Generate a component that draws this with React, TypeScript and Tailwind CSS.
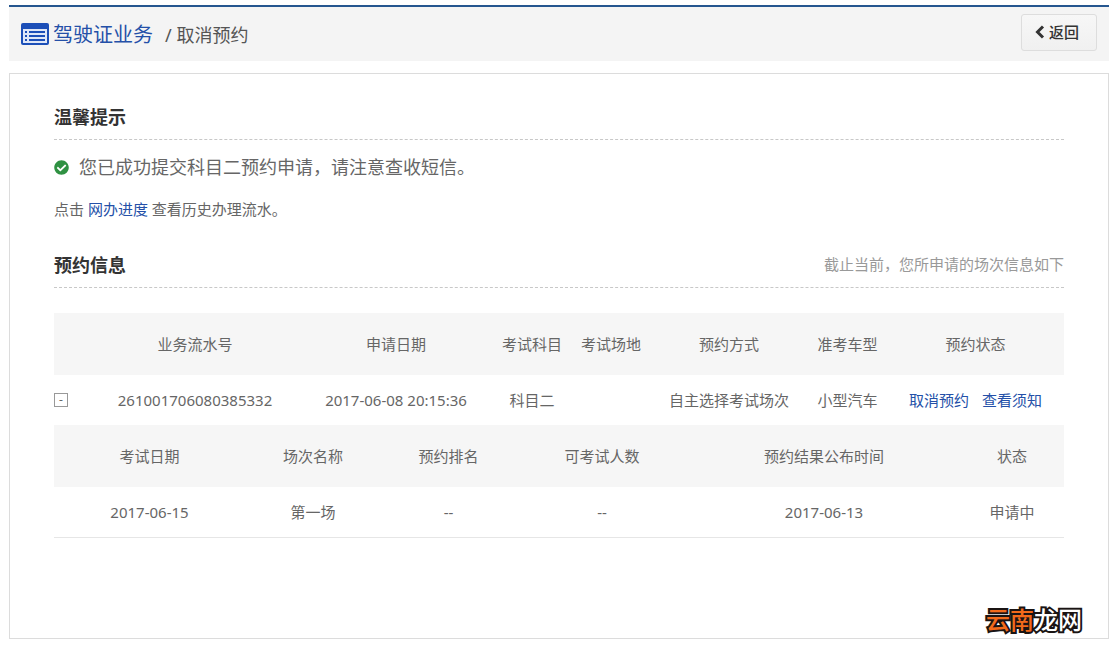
import React, { useState } from 'react';
import { FaCheckCircle } from 'react-icons/fa';

interface Session {
  examDate: string;
  name: string;
  rank: string;
  capacity: string;
  publishDate: string;
  status: string;
}

interface Booking {
  serial: string;
  appliedAt: string;
  subject: string;
  place: string;
  method: string;
  carType: string;
  sessions: Session[];
}

const bookings: Booking[] = [
  {
    serial: '261001706080385332',
    appliedAt: '2017-06-08 20:15:36',
    subject: '科目二',
    place: '',
    method: '自主选择考试场次',
    carType: '小型汽车',
    sessions: [
      {
        examDate: '2017-06-15',
        name: '第一场',
        rank: '--',
        capacity: '--',
        publishDate: '2017-06-13',
        status: '申请中',
      },
    ],
  },
];

function ListIcon() {
  return (
    <svg width="28" height="22" viewBox="0 0 28 22" aria-hidden="true">
      <rect width="28" height="22" rx="2" fill="#1c4fb8" />
      <rect x="2" y="6" width="24" height="14" fill="#dfe7f8" />
      <g fill="#1c4fb8">
        <rect x="4" y="8" width="2" height="2" />
        <rect x="8" y="8" width="16" height="2" />
        <rect x="4" y="12" width="2" height="2" />
        <rect x="8" y="12" width="16" height="2" />
        <rect x="4" y="16" width="2" height="2" />
        <rect x="8" y="16" width="16" height="2" />
      </g>
    </svg>
  );
}

function BackIcon() {
  return (
    <svg width="10" height="14" viewBox="0 0 10 14" fill="none" stroke="currentColor" strokeWidth="3" aria-hidden="true">
      <path d="M8 1.5 2.5 7 8 12.5" />
    </svg>
  );
}

function SectionTitle({ title, note }: { title: string; note?: string }) {
  return (
    <div className="flex items-start justify-between border-b border-dashed border-[#c8c8c8] pb-[10px]">
      <h2 className="text-[18px] leading-6 font-bold text-[#333]">{title}</h2>
      {note && <p className="text-[15px] leading-[22px] text-[#999]">{note}</p>}
    </div>
  );
}

function SessionTable({ sessions }: { sessions: Session[] }) {
  return (
    <table className="w-full table-fixed text-center">
      <thead>
        <tr className="h-[62px] bg-[#f6f6f6]">
          <th className="w-[191px] font-normal">考试日期</th>
          <th className="w-[136px] font-normal">场次名称</th>
          <th className="w-[135px] font-normal">预约排名</th>
          <th className="w-[172px] font-normal">可考试人数</th>
          <th className="w-[272px] font-normal">预约结果公布时间</th>
          <th className="w-[104px] font-normal">状态</th>
        </tr>
      </thead>
      <tbody>
        {sessions.map((s) => (
          <tr key={s.examDate} className="h-[50px] border-b border-[#e6e6e6]">
            <td>{s.examDate}</td>
            <td>{s.name}</td>
            <td>{s.rank}</td>
            <td>{s.capacity}</td>
            <td>{s.publishDate}</td>
            <td>{s.status}</td>
          </tr>
        ))}
      </tbody>
    </table>
  );
}

export default function App() {
  const [open, setOpen] = useState(true);

  return (
    <div className="bg-white px-[9px] pt-[5px] pb-[10px] font-['Noto_Sans','Noto_Sans_CJK_SC',sans-serif] text-[15px] leading-6 font-normal text-[#666]">
      {/* Header */}
      <header className="flex h-14 items-center justify-between border-t-2 border-[#25568f] bg-[#f4f4f4] px-3">
        <div className="flex items-center">
          <ListIcon />
          <h1 className="ml-1 pt-[2px] text-[20px] text-[#2450a8]">驾驶证业务</h1>
          <span className="ml-3 pt-[2px] text-[18px] text-[#555]">/ 取消预约</span>
        </div>
        <button
          type="button"
          className="mb-1 flex h-[37px] w-[76px] items-center justify-center gap-1 rounded-[3px] border border-[#ddd] bg-linear-to-b from-[#f7f7f7] to-[#f0f0f0] pr-1 font-medium text-[#333]"
        >
          <BackIcon />
          返回
        </button>
      </header>

      <main className="relative mt-3 border border-[#dcdcdc] px-11 pt-[31px] pb-[100px]">
        {/* Tips */}
        <SectionTitle title="温馨提示" />
        <p className="mt-[13px] flex items-center gap-[10px] text-[18px] leading-7">
          <FaCheckCircle size={15} className="text-[#2f9142]" />
          您已成功提交科目二预约申请，请注意查收短信。
        </p>
        <p className="mt-4 mb-8">
          点击 <a href="#progress" className="text-[#2450a8]">网办进度</a> 查看历史办理流水。
        </p>

        {/* Booking info */}
        <SectionTitle title="预约信息" note="截止当前，您所申请的场次信息如下" />
        <table className="mt-[25px] w-full table-fixed text-center">
          <thead>
            <tr className="h-[62px] bg-[#f6f6f6]">
              <th className="w-[36px]" />
              <th className="w-[210px] font-normal">业务流水号</th>
              <th className="w-[192px] font-normal">申请日期</th>
              <th className="w-[80px] font-normal">考试科目</th>
              <th className="w-[78px] font-normal">考试场地</th>
              <th className="w-[158px] font-normal">预约方式</th>
              <th className="w-[79px] font-normal">准考车型</th>
              <th className="w-[177px] font-normal">预约状态</th>
            </tr>
          </thead>
          <tbody>
            {bookings.map((b) => (
              <React.Fragment key={b.serial}>
                <tr className="h-[50px]">
                  <td>
                    <button
                      type="button"
                      aria-expanded={open}
                      onClick={() => setOpen(!open)}
                      className="flex size-[14px] items-center justify-center border border-[#999] text-[12px] leading-3"
                    >
                      {open ? '-' : '+'}
                    </button>
                  </td>
                  <td>{b.serial}</td>
                  <td>{b.appliedAt}</td>
                  <td>{b.subject}</td>
                  <td>{b.place}</td>
                  <td>{b.method}</td>
                  <td>{b.carType}</td>
                  <td>
                    <div className="flex justify-center gap-[13px] text-[#2450a8]">
                      <a href="#cancel">取消预约</a>
                      <a href="#notice">查看须知</a>
                    </div>
                  </td>
                </tr>
                {open && (
                  <tr>
                    <td colSpan={8} className="p-0">
                      <SessionTable sessions={b.sessions} />
                    </td>
                  </tr>
                )}
              </React.Fragment>
            ))}
          </tbody>
        </table>

        {/* Watermark */}
        <div className="absolute right-[26px] bottom-0 text-[24px] leading-9 font-medium text-white [-webkit-text-stroke:4px_#1a1413] [paint-order:stroke_fill]">
          <span className="text-[#f26a1b]">云南</span>龙网
        </div>
      </main>
    </div>
  );
}
